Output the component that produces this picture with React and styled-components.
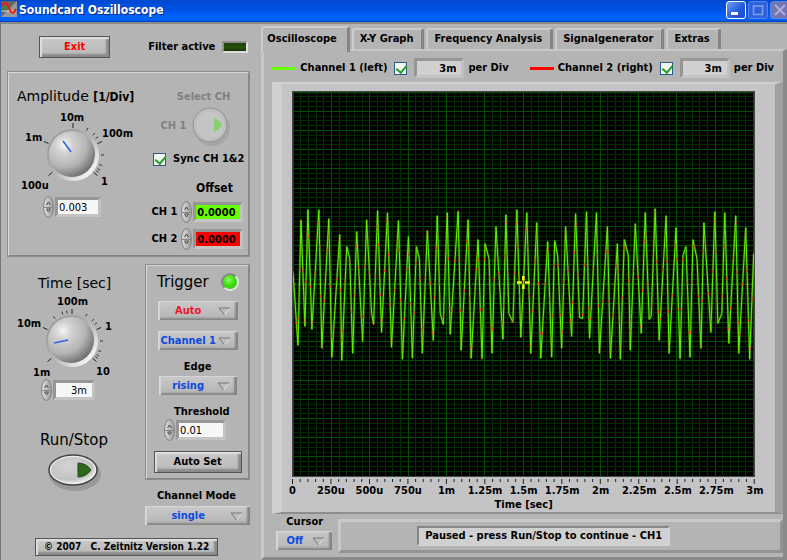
import React, {useState} from 'react'
import styled, {createGlobalStyle} from 'styled-components'

const GlobalStyle = createGlobalStyle`
    * {
        box-sizing: border-box;
    }

    body {
        margin: 0;
        background: #b4b4b4;
        color: #000;
        font-family: 'DejaVu Sans Condensed', 'DejaVu Sans', sans-serif;
        font-size: 11px;
        font-weight: bold;
        line-height: 14px;
    }

    button, input, select {
        font: inherit;
        color: inherit;
        margin: 0;
    }
`

const Page = styled.div`
    display: flex;
    flex-direction: column;
    min-height: 100vh;
`

/* title bar */

const TitleBar = styled.header`
    display: flex;
    align-items: flex-start;
    gap: 2px;
    height: 22px;
    padding: 1px 0 0 1px;
    color: #fff;
    background: linear-gradient(#0049d0, #0053e8 50%, #0062ff 75%, #0062ff 90%, #0040c0);
`

const TitleText = styled.h1`
    flex: 1;
    margin: 0;
    font-size: 12px;
    line-height: 18px;
    text-shadow: 1px 1px #0a2a80;
`

const WindowButtons = styled.div`
    display: flex;
    gap: 2px;
    height: 18px;
    margin-right: -3px;
`

const WindowButton = styled.button`
    width: 20px;
    padding: 0;
    border: 1px solid ${props => props.$dim ? '#5b84e6' : '#fff'};
    border-radius: 3px;
    background: ${props => props.$dim || 'linear-gradient(135deg, #6d9cf8, #2458dc 60%, #1d4cc8)'};

    svg {
        display: block;
    }
`

/* shared parts */

const Main = styled.main`
    display: flex;
    flex: 1;
    border-top: 2px solid #8a8a84;
    border-left: 1px solid #77776c;
`

const Row = styled.div`
    display: flex;
    align-items: center;
    gap: ${props => props.$gap || 0}px;
`

const Group = styled.section`
    border: 2px groove #d8d8d8;
    outline: 1px solid #8c8c8c;
    outline-offset: -1px;
`

const Heading = styled.h2`
    margin: 0;
    font-family: 'DejaVu Sans', sans-serif;
    font-size: ${props => props.$big ? 15 : 14}px;
    font-weight: normal;
    line-height: 18px;
    white-space: nowrap;

    small {
        font-family: 'DejaVu Sans Condensed', 'DejaVu Sans', sans-serif;
        font-size: 12px;
        font-weight: bold;
    }
`

const Label = styled.label`
    white-space: nowrap;
    color: ${props => props.$dim ? '#808080' : '#000'};
`

const Push = styled.button`
    height: 22px;
    padding: 0 ${props => props.$pad}px;
    border: 1px solid #555;
    color: ${props => props.$color || '#000'};
    background: linear-gradient(#c8c8c8, #b9b9b9);
    box-shadow: inset 2px 2px 1px #dedede, inset -3px -3px 2px #8a8a8a;
    white-space: nowrap;
`

const Check = styled.input`
    appearance: none;
    position: relative;
    width: 13px;
    height: 13px;
    border: 1px solid #2c5a86;
    background: #f4f6f2;

    &:checked::after {
        content: '';
        position: absolute;
        left: 3px;
        top: 0;
        width: 5px;
        height: 8px;
        border: solid #21a121;
        border-width: 0 2px 2px 0;
        transform: rotate(40deg);
    }
`

const Field = styled.input`
    width: ${props => props.$width}px;
    height: 20px;
    padding: 0 ${props => props.$right ? 5 : 1}px 0 1px;
    border: 3px solid;
    border-color: #969696 #c0c0c0 #c4c4c4 #969696;
    background: ${props => props.$bg || '#f6f6f6'};
    font-weight: ${props => props.$light ? 'normal' : 'bold'};
    text-align: ${props => props.$right ? 'right' : 'left'};
    border-radius: 0;
`

const Spinner = styled.div`
    display: flex;
    flex-direction: column;
    width: 11px;
    height: 22px;
    padding: 3px 0;
    border: 1px solid #858585;
    border-radius: 50%;
    background: linear-gradient(90deg, #dedede, #9d9d9d);
`

const Step = styled.button`
    flex: 1;
    padding: 0;
    border: 0;
    background: none;

    &:first-child {
        border-bottom: 1px solid #858585;
    }

    svg {
        display: block;
        margin: 0 auto;
    }
`

const SelectBox = styled.div`
    position: relative;
    width: ${props => props.$width};

    svg {
        position: absolute;
        right: 7px;
        top: 6px;
        pointer-events: none;
    }
`

const SelectInput = styled.select`
    appearance: none;
    display: block;
    width: 100%;
    height: 19px;
    padding: 0 20px 0 1px;
    border: 0;
    border-radius: 0;
    color: ${props => props.$color || '#0a4ae0'};
    background: linear-gradient(#c9c9c9, #b4b4b4);
    box-shadow: inset 2px 1px 1px #d8d8d8, inset -3px -2px 2px #858585;
    text-align: center;
    text-align-last: center;
`

const Dropdown = ({id, width = '100%', color, label, options}) => (
    <SelectBox $width={width}>
        <SelectInput id={id} $color={color} aria-label={label}>
            {options.map(option => <option key={option}>{option}</option>)}
        </SelectInput>
        <svg width="13" height="9" viewBox="0 0 13 9">
            <path d="M1 1H12L6.5 8Z" fill="#bdbdbd" />
            <path d="M12 1L6.5 8" stroke="#e4e4e4" fill="none" />
            <path d="M12 1H1L6.5 8" stroke="#777" fill="none" />
        </svg>
    </SelectBox>
)

const Numeric = ({id, label, start, ...rest}) => {
    const [value, setValue] = useState(start)

    const size = value.endsWith('m') ? 1 : Math.pow(10, -(value.split('.')[1] || '').length)

    const step = amount => {
        const next = parseFloat(value) + amount
        setValue(value.endsWith('m') ? `${next}m` : next.toFixed((value.split('.')[1] || '').length))
    }

    return (
        <Row $gap={1}>
            <Spinner>
                <Step aria-label={`${label} up`} onClick={() => step(size)}>
                    <svg width="5" height="5" viewBox="0 0 5 5"><path d="M0.5 4L2.5 1L4.5 4" stroke="#444" fill="none" /></svg>
                </Step>
                <Step aria-label={`${label} down`} onClick={() => step(-size)}>
                    <svg width="5" height="5" viewBox="0 0 5 5"><path d="M0.5 1L2.5 4L4.5 1Z" stroke="#555" fill="none" /></svg>
                </Step>
            </Spinner>
            <Field id={id} aria-label={label} value={value} onChange={event => setValue(event.target.value)} {...rest} />
        </Row>
    )
}

/* rotary dials */

const DialBox = styled.div`
    position: relative;
    width: 122px;
    height: 84px;
    margin-top: 3px;

    svg {
        display: block;
    }
`

const DialInput = styled.input`
    position: absolute;
    inset: 0;
    width: 100%;
    height: 100%;
    opacity: 0;
`

const DialText = styled.text`
    font-size: 11px;
    font-weight: bold;
`

const polar = (angle, radius) => {
    const rad = angle * Math.PI / 180
    return `${56 + radius * Math.sin(rad)} ${46 - radius * Math.cos(rad)}`
}

const majors = [-130, -65, 0, 65, 130]

const Dial = ({label, marks, minors, pointer, value}) => (
    <DialBox>
        <svg width="122" height="84" viewBox="0 0 122 84">
            <defs>
                <radialGradient id="knob" cx="0.33" cy="0.3" r="0.75">
                    <stop offset="0" stopColor="#f6f6f6" />
                    <stop offset="0.25" stopColor="#d2d2d2" />
                    <stop offset="0.65" stopColor="#b4b4b4" />
                    <stop offset="1" stopColor="#6e6e6e" />
                </radialGradient>
                <linearGradient id="ring" x1="0" y1="0" x2="1" y2="1">
                    <stop offset="0.1" stopColor="#949494" />
                    <stop offset="0.5" stopColor="#b4b4b4" />
                    <stop offset="0.85" stopColor="#f4f4f4" />
                </linearGradient>
            </defs>
            {majors.map(angle => <path key={angle} d={`M${polar(angle, 27)}L${polar(angle, 32)}`} stroke="#222" />)}
            {minors.map(angle => <path key={angle} d={`M${polar(angle, 28)}L${polar(angle, 31)}`} stroke="#333" />)}
            <circle cx="56" cy="46" r="26" fill="url(#ring)" />
            <circle cx="55" cy="45" r="23" fill="url(#knob)" />
            <path d={pointer} stroke="#2f62e0" strokeWidth="1.6" />
            {marks.map(([text, x, y]) => <DialText key={text} x={x} y={y}>{text}</DialText>)}
        </svg>
        <DialInput type="range" min="0" max="100" defaultValue={value} aria-label={label} />
    </DialBox>
)

const ampMarks = [['10m', 43, 12], ['100m', 85, 28], ['1m', 8, 32], ['100u', 4, 80], ['1', 84, 76]]
const ampMinors = [29, 45, 54, 90, 110, 119, 124]
const timeMarks = [['100m', 41, 10], ['10m', 1, 32], ['1', 89, 35], ['1m', 17, 81], ['10', 80, 80]]
const timeMinors = [-37, -19, -10, 29, 45, 54, 90, 110, 119, 124]

/* left side */

const Controls = styled.div`
    flex: 0 0 260px;
    padding: 12px 11px 4px 6px;
`

const TopRow = styled(Row)`
    justify-content: space-between;
    padding: 0 2px 0 32px;
    margin-bottom: 13px;
`

const Led = styled.div`
    width: 26px;
    height: 12px;
    border: 2px solid;
    border-color: #909090 #dedede #dedede #909090;
    background: linear-gradient(#1c4009, #285210 60%, #143005);
`

const AmplitudeGroup = styled(Group)`
    display: grid;
    grid-template-columns: 132px 1fr;
    height: 186px;
    padding: 14px 4px 0 8px;
`

const AmplitudeLeft = styled.div`
    display: flex;
    flex-direction: column;

    > :last-child {
        margin: 3px 0 0 26px;
    }
`

const AmplitudeRight = styled.div`
    display: flex;
    flex-direction: column;
    padding-top: 3px;
`

const SelectChannel = styled.div`
    display: flex;
    flex-direction: column;
    align-items: flex-end;
    gap: 2px;
    padding-right: 14px;
`

const ChannelKnob = styled.button`
    display: block;
    padding: 0;
    border: 0;
    background: none;

    svg {
        display: block;
    }
`

const SyncRow = styled(Row)`
    margin: 6px 0 14px 4px;
`

const OffsetTitle = styled.div`
    padding-left: 47px;
    margin-bottom: 5px;
    font-size: 12px;
    line-height: 16px;
`

const OffsetRow = styled(Row)`
    justify-content: flex-end;
    padding-right: 1px;
    margin-bottom: 5px;
`

const Lower = styled.div`
    display: grid;
    grid-template-columns: 138px 1fr;
    margin-top: 7px;
`

const TimeColumn = styled.div`
    padding: 10px 0 0 9px;
`

const Indent = styled.div`
    padding-left: ${props => props.$left}px;
    margin-top: ${props => props.$top || 0}px;
`

const TriggerGroup = styled(Group)`
    display: flex;
    flex-direction: column;
    align-items: center;
    height: 216px;
    padding: 7px 6px 0;
`

const TriggerHead = styled(Row)`
    align-self: stretch;
    justify-content: space-between;
    padding: 0 3px 0 4px;
    margin-bottom: 10px;
`

const Lamp = styled.div`
    width: 18px;
    height: 18px;
    border: 2px solid;
    border-color: #888 #e4e4e4 #e4e4e4 #888;
    border-radius: 50%;
    background: radial-gradient(circle at 40% 35%, #8cff60, #3fe010 45%, #2cb808);
`

const Gap = styled.div`
    height: ${props => props.$size}px;
`

const ThresholdBlock = styled.div`
    display: flex;
    flex-direction: column;
    align-self: flex-start;
    padding-left: 11px;

    label {
        padding-left: 10px;
    }
`

const RunButton = styled.button`
    display: block;
    padding: 0;
    border: 0;
    background: none;

    svg {
        display: block;
    }
`

const ModeBlock = styled.div`
    margin-top: 9px;
    display: flex;
    flex-direction: column;
    gap: 3px;

    label {
        padding-left: 12px;
    }
`

const Version = styled(Push)`
    display: block;
    height: 18px;
    margin: 13px 0 0 28px;
    font-size: 10px;
    line-height: 12px;
    white-space: pre;
`

/* right side */

const Scope = styled.div`
    flex: 1;
    display: flex;
    flex-direction: column;
    min-width: 0;
    padding-top: 2px;
`

const Tabs = styled.nav`
    display: flex;
    align-items: flex-end;
    height: 23px;
    gap: 2px;
`

const Tab = styled.button`
    height: ${props => props.$active ? 26 : 21}px;
    margin-bottom: ${props => props.$active ? -3 : 0}px;
    padding: 0 ${props => props.$active ? '10px 3px 4px' : '8px 1px 6px'};
    border: solid;
    border-width: 2px 3px 0 2px;
    border-color: #cdcdcd #858585 #cdcdcd #cdcdcd;
    border-radius: 3px 3px 0 0;
    background: #b4b4b4;
    white-space: nowrap;
    position: relative;
`

const Panel = styled.div`
    flex: 1;
    display: flex;
    flex-direction: column;
    border: solid;
    border-width: 2px 4px 3px 3px;
    border-color: #c8c8c8 #8a8a8a #8a8a8a #c8c8c8;
    padding: 0 0 1px 8px;
`

const Legend = styled.div`
    display: flex;
    justify-content: space-between;
    align-items: center;
    height: 31px;
    padding: 3px 9px 0 0;
`

const Swatch = styled.div`
    width: 24px;
    height: 3px;
    background: ${props => props.$color};
`

const GraphFrame = styled.div`
    padding: 7px 20px 1px 10px;
    border: solid;
    border-width: 2px 8px 2px 10px;
    border-color: #d0d0d0 #a0a0a0 #8e8e8e #d0d0d0;
    background: #c4c4c6;
`

const Plot = styled.svg`
    display: block;
    width: 100%;
    height: 386px;
    border: 1px solid #444;
    background: #000;
`

const Ruler = styled.svg`
    display: block;
    width: 100%;
    height: 7px;
`

const Ticks = styled.div`
    display: flex;
    justify-content: space-between;

    span {
        display: flex;
        justify-content: center;
        width: 0;
        white-space: nowrap;
    }
`

const AxisName = styled.div`
    text-align: center;
    line-height: 13px;
`

const BottomRow = styled.div`
    display: flex;
    flex: 1;
    gap: 6px;
    padding-left: 4px;
`

const CursorBox = styled.div`
    width: 56px;

    label {
        display: block;
        padding: 1px 0 2px 10px;
    }
`

const StatusPanel = styled.div`
    flex: 1;
    height: 34px;
    margin-top: 5px;
    padding-right: 34px;
    display: flex;
    align-items: center;
    justify-content: center;
    border: 3px solid;
    border-color: #c8c8c8 #939393 #939393 #c8c8c8;
`

const Status = styled.output`
    padding: 1px 6px;
    border: 2px solid;
    border-color: #868686 #d2d2d2 #d2d2d2 #868686;
    background: #d0d0d0;
    white-space: nowrap;
`

// turning points of the trace, in plot pixels
const trace = [
    [0, 180], [5, 254], [8, 128], [12, 235], [15, 118], [19, 238], [26, 118], [29, 257], [36, 127], [39, 266],
    [47, 143], [49, 269], [54, 155], [57, 167], [60, 262], [64, 140], [70, 250], [74, 128], [79, 222], [81, 233],
    [85, 119], [89, 241], [95, 121], [99, 256], [106, 129], [110, 268], [116, 145], [120, 267], [124, 155], [127, 167],
    [130, 262], [135, 139], [141, 249], [145, 124], [148, 222], [151, 233], [155, 121], [158, 243], [166, 119], [169, 259],
    [176, 128], [179, 267], [186, 148], [190, 268], [193, 152], [197, 167], [200, 262], [204, 135], [211, 248], [214, 123],
    [217, 222], [221, 231], [225, 118], [229, 246], [235, 121], [239, 262], [245, 131], [249, 267], [256, 150], [260, 266],
    [263, 149], [266, 164], [270, 257], [274, 135], [280, 245], [284, 122], [288, 226], [291, 227], [295, 120], [298, 247],
    [305, 121], [308, 262], [316, 135], [319, 267], [326, 152], [329, 268], [333, 148], [337, 164], [339, 259], [344, 132],
    [350, 242], [354, 121], [358, 228], [360, 225], [364, 117], [368, 249], [375, 124], [378, 262], [385, 136], [389, 268],
    [392, 164], [395, 155], [399, 266], [402, 148], [406, 167], [410, 257], [413, 131], [420, 241], [424, 120], [427, 232],
    [431, 222], [434, 121], [438, 252], [445, 124], [448, 262], [455, 136], [459, 268], [463, 162]
]

const times = ['0', '250u', '500u', '750u', '1m', '1.25m', '1.5m', '1.75m', '2m', '2.25m', '2.5m', '2.75m', '3m']
const range = count => Array.from({length: count + 1}, (_, i) => i)
const tracePath = `M${trace.map(([x, y]) => `${x} ${y}`).join('L')}`

const Graph = () => (
    <Plot viewBox="0 0 463 385" preserveAspectRatio="none" role="img" aria-label="Channel 1 wave form">
        <g shapeRendering="crispEdges">
            {range(80).map(i => <path key={i} d={`M0 ${i * 385 / 80}H463`} stroke="#002e00" />)}
            {range(60).map(i => <path key={i} d={`M${i * 463 / 60} 0V385`} stroke="#002e00" />)}
            {range(20).map(i => <path key={i} d={`M0 ${i * 385 / 20}H463`} stroke="#005200" />)}
            {range(12).map(i => <path key={i} d={`M${i * 463 / 12} 0V385`} stroke="#005200" />)}
        </g>
        <path d="M0 192.5H463" stroke="#1c8a1c" strokeDasharray="3 2" />
        <path d={tracePath} fill="none" stroke="#3c9a00" strokeOpacity="0.5" strokeWidth="2.4" strokeLinejoin="bevel" />
        <path d={tracePath} fill="none" stroke="#f05030" strokeDasharray="3 47" strokeWidth="1.4" />
        <path d={tracePath} fill="none" stroke="#62f400" strokeDasharray="47 3" strokeDashoffset="-3" />
        <path d="M225 191H230M233 191H238M231.5 184.5V189M231.5 193V197.5" stroke="#ffff00" strokeWidth="2.5" />
    </Plot>
)

const tabs = ['Oscilloscope', 'X-Y Graph', 'Frequency Analysis', 'Signalgenerator', 'Extras']

const Channel = ({id, name, color}) => (
    <Row $gap={7}>
        <Row $gap={4}>
            <Swatch $color={color} />
            <Label htmlFor={id}>{name}</Label>
        </Row>
        <Check id={id} type="checkbox" defaultChecked />
        <Row $gap={4}>
            <Field id={`${id}-div`} $width={50} $right $bg="#d0d0d0" defaultValue="3m" />
            <Label htmlFor={`${id}-div`}>per Div</Label>
        </Row>
    </Row>
)

const App = () => {

    const [tab, setTab] = useState('Oscilloscope')

    return (
        <Page>
            <GlobalStyle />
            <TitleBar>
                <svg width="16" height="16" viewBox="0 0 16 16">
                    <path d="M0 0H16V16H0Z" fill="#999" />
                    <path d="M0 0H16L0 16Z" fill="#666" />
                    <path d="M0 10H13" stroke="#ddd" />
                    <path d="M1 10C3 4 5 4 7 9" stroke="#20a020" strokeWidth="1.5" fill="none" />
                    <path d="M0 5C3 0 6 2 8 7S12 14 15 8" stroke="#f01818" strokeWidth="2" fill="none" />
                </svg>
                <TitleText>Soundcard Oszilloscope</TitleText>
                <WindowButtons>
                    <WindowButton aria-label="Minimize">
                        <svg width="18" height="16" viewBox="0 0 18 16"><path d="M4 11.5H11" stroke="#fff" strokeWidth="3" /></svg>
                    </WindowButton>
                    <WindowButton aria-label="Maximize" $dim="#2e62dd">
                        <svg width="18" height="16" viewBox="0 0 18 16"><path d="M4.5 3V12.5H13.5V3M4 4H14" stroke="#7f9fe8" strokeWidth="1.5" fill="none" /></svg>
                    </WindowButton>
                    <WindowButton aria-label="Close" $dim="#7475b4">
                        <svg width="18" height="16" viewBox="0 0 18 16"><path d="M4 3L14 13M14 3L4 13" stroke="#b0afd4" strokeWidth="2" /></svg>
                    </WindowButton>
                </WindowButtons>
            </TitleBar>
            <Main>
                <Controls>
                    <TopRow>
                        <Push $color="#ff0000" $pad={24}>Exit</Push>
                        <Row $gap={7}>
                            <span>Filter active</span>
                            <Led />
                        </Row>
                    </TopRow>

                    <AmplitudeGroup>
                        <AmplitudeLeft>
                            <Heading>Amplitude <small>[1/Div]</small></Heading>
                            <Dial label="Amplitude" marks={ampMarks} minors={ampMinors} pointer="M46 32L54 43" value="37" />
                            <Numeric label="Amplitude value" start="0.003" $width={46} $light />
                        </AmplitudeLeft>
                        <AmplitudeRight>
                            <SelectChannel>
                                <Label $dim htmlFor="select-ch">Select CH</Label>
                                <Row $gap={4}>
                                    <Label $dim as="span">CH 1</Label>
                                    <ChannelKnob id="select-ch" disabled>
                                        <svg width="40" height="40" viewBox="0 0 40 40">
                                            <circle cx="22" cy="22" r="18" fill="#a6a6a6" />
                                            <circle cx="20" cy="19" r="17" fill="#bdbdbd" stroke="#929292" />
                                            <circle cx="20" cy="19" r="14" fill="#c4c4c4" />
                                            <path d="M24 12Q30 15 32 19Q30 23 24 26Z" fill="#86d070" />
                                        </svg>
                                    </ChannelKnob>
                                </Row>
                            </SelectChannel>
                            <SyncRow $gap={7}>
                                <Check id="sync" type="checkbox" defaultChecked />
                                <Label htmlFor="sync">Sync CH 1&amp;2</Label>
                            </SyncRow>
                            <OffsetTitle>Offset</OffsetTitle>
                            <OffsetRow $gap={4}>
                                <Label htmlFor="offset1">CH 1</Label>
                                <Numeric id="offset1" label="Offset CH 1" start="0.0000" $width={50} $bg="#66ff00" />
                            </OffsetRow>
                            <OffsetRow $gap={4}>
                                <Label htmlFor="offset2">CH 2</Label>
                                <Numeric id="offset2" label="Offset CH 2" start="0.0000" $width={50} $bg="#ff0000" />
                            </OffsetRow>
                        </AmplitudeRight>
                    </AmplitudeGroup>

                    <Lower>
                        <TimeColumn>
                            <Indent $left={22}><Heading>Time [sec]</Heading></Indent>
                            <Dial label="Time" marks={timeMarks} minors={timeMinors} pointer="M38 48L52 45" value="12" />
                            <Indent $left={25}>
                                <Numeric label="Time value" start="3m" $width={42} $light $right />
                            </Indent>
                            <Indent $left={24} $top={30}><Heading $big>Run/Stop</Heading></Indent>
                            <Indent $left={30} $top={2}>
                                <RunButton aria-label="Run/Stop">
                                    <svg width="56" height="42" viewBox="0 0 56 42">
                                        <defs>
                                            <radialGradient id="run" cx="0.4" cy="0.35" r="0.7">
                                                <stop offset="0" stopColor="#d4d4d4" />
                                                <stop offset="0.75" stopColor="#c2c2c2" />
                                                <stop offset="1" stopColor="#f0f0f0" />
                                            </radialGradient>
                                        </defs>
                                        <ellipse cx="29" cy="23" rx="26" ry="17" fill="#999" />
                                        <ellipse cx="27" cy="19" rx="24" ry="15" fill="#eee" stroke="#444" strokeWidth="1.5" />
                                        <ellipse cx="27" cy="19" rx="22" ry="13" fill="url(#run)" />
                                        <path d="M32 12Q40 12 45 19Q40 26 32 26Z" fill="#2e681a" stroke="#1c4a10" />
                                    </svg>
                                </RunButton>
                            </Indent>
                        </TimeColumn>

                        <div>
                            <TriggerGroup>
                                <TriggerHead>
                                    <Heading $big>Trigger</Heading>
                                    <Lamp />
                                </TriggerHead>
                                <Dropdown label="Trigger mode" width="80px" color="#f01428" options={['Auto', 'Normal', 'Single']} />
                                <Gap $size={11} />
                                <Dropdown label="Trigger source" width="80px" options={['Channel 1', 'Channel 2']} />
                                <Gap $size={10} />
                                <Label htmlFor="edge">Edge</Label>
                                <Gap $size={2} />
                                <Dropdown id="edge" width="78px" options={['rising', 'falling']} />
                                <Gap $size={10} />
                                <ThresholdBlock>
                                    <Label htmlFor="threshold">Threshold</Label>
                                    <Numeric id="threshold" label="Threshold" start="0.01" $width={50} $light />
                                </ThresholdBlock>
                                <Gap $size={10} />
                                <Push $pad={19}>Auto Set</Push>
                            </TriggerGroup>
                            <ModeBlock>
                                <Label htmlFor="mode">Channel Mode</Label>
                                <Dropdown id="mode" options={['single', 'dual']} />
                            </ModeBlock>
                        </div>
                    </Lower>
                    <Version $pad={8}>© 2007   C. Zeitnitz Version 1.22</Version>
                </Controls>

                <Scope>
                    <Tabs role="tablist">
                        {tabs.map(name => (
                            <Tab key={name} role="tab" $active={name === tab} aria-selected={name === tab} onClick={() => setTab(name)}>
                                {name}
                            </Tab>
                        ))}
                    </Tabs>
                    <Panel>
                        <Legend>
                            <Channel id="ch1" name="Channel 1 (left)" color="#66ff00" />
                            <Channel id="ch2" name="Channel 2 (right)" color="#ff0000" />
                        </Legend>
                        <GraphFrame>
                            <Graph />
                            <Ruler viewBox="0 0 463 7" preserveAspectRatio="none" shapeRendering="crispEdges">
                                {range(60).map(i => <path key={i} d={`M${0.5 + i * 462 / 60} 2V${i % 5 ? 5 : 7}`} stroke="#222" />)}
                            </Ruler>
                            <Ticks>
                                {times.map(time => <span key={time}>{time}</span>)}
                            </Ticks>
                            <AxisName>Time [sec]</AxisName>
                        </GraphFrame>
                        <BottomRow>
                            <CursorBox>
                                <Label htmlFor="cursor">Cursor</Label>
                                <Dropdown id="cursor" options={['Off', 'On']} />
                            </CursorBox>
                            <StatusPanel>
                                <Status>Paused - press Run/Stop to continue - CH1</Status>
                            </StatusPanel>
                        </BottomRow>
                    </Panel>
                </Scope>
            </Main>
        </Page>
    )
}

export default App
